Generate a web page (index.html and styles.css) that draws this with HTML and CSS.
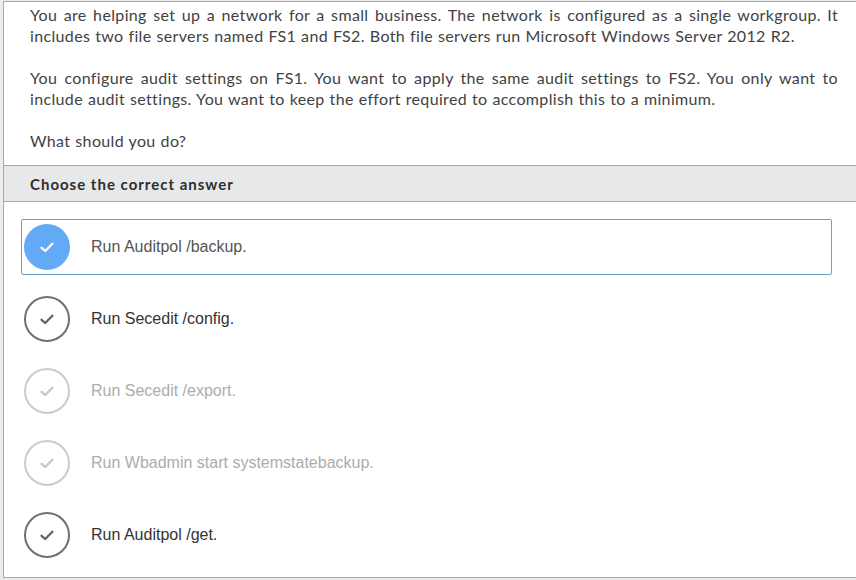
FILE: index.html
```html
<!DOCTYPE html>
<html>
<head>
<meta charset="utf-8">
<link rel="stylesheet" href="styles.css">
</head>
<body>
<div class="panel">
  <div class="question">
    <p>You are helping set up a network for a small business. The network is configured as a single workgroup. It includes two file servers named FS1 and FS2. Both file servers run Microsoft Windows Server 2012 R2.</p>
    <p>You configure audit settings on FS1. You want to apply the same audit settings to FS2. You only want to include audit settings. You want to keep the effort required to accomplish this to a minimum.</p>
    <p>What should you do?</p>
  </div>
  <div class="header">Choose the correct answer</div>
  <div class="options">
    <div class="option selected">
      <span class="circle"><svg viewBox="0 0 14 11" width="14" height="11"><path d="M1.6 5.8 L5.2 9 L12.4 1.8" fill="none" stroke="currentColor" stroke-width="2.3" stroke-linecap="round" stroke-linejoin="round"/></svg></span>
      <span class="label">Run Auditpol /backup.</span>
    </div>
    <div class="option dark">
      <span class="circle"><svg viewBox="0 0 14 11" width="14" height="11"><path d="M1.6 5.8 L5.2 9 L12.4 1.8" fill="none" stroke="currentColor" stroke-width="2.3" stroke-linecap="round" stroke-linejoin="round"/></svg></span>
      <span class="label">Run Secedit /config.</span>
    </div>
    <div class="option faded">
      <span class="circle"><svg viewBox="0 0 14 11" width="14" height="11"><path d="M1.6 5.8 L5.2 9 L12.4 1.8" fill="none" stroke="currentColor" stroke-width="2.3" stroke-linecap="round" stroke-linejoin="round"/></svg></span>
      <span class="label">Run Secedit /export.</span>
    </div>
    <div class="option faded">
      <span class="circle"><svg viewBox="0 0 14 11" width="14" height="11"><path d="M1.6 5.8 L5.2 9 L12.4 1.8" fill="none" stroke="currentColor" stroke-width="2.3" stroke-linecap="round" stroke-linejoin="round"/></svg></span>
      <span class="label">Run Wbadmin start systemstatebackup.</span>
    </div>
    <div class="option dark">
      <span class="circle"><svg viewBox="0 0 14 11" width="14" height="11"><path d="M1.6 5.8 L5.2 9 L12.4 1.8" fill="none" stroke="currentColor" stroke-width="2.3" stroke-linecap="round" stroke-linejoin="round"/></svg></span>
      <span class="label">Run Auditpol /get.</span>
    </div>
  </div>
</div>
</body>
</html>
```

FILE: styles.css
```css
html, body {
  margin: 0;
  padding: 0;
  background: #ececec;
  height: 580px;
  overflow: hidden;
}

.panel {
  margin: 1px 0 0 3px;
  background: #fff;
  border-top: 1px solid #a9a9a9;
  border-left: 1px solid #a9a9a9;
  border-bottom: 1px solid #a9a9a9;
  height: 577px;
  box-sizing: border-box;
  display: flex;
  flex-direction: column;
}

.question {
  padding: 2px 18px 14px 26px;
  font-family: Lato, "Open Sans", sans-serif;
  font-size: 16px;
  line-height: 21px;
  color: #424242;
  letter-spacing: 0.35px;
  word-spacing: 0.5px;
}

.question p {
  margin: 0 0 21px 0;
  text-align: justify;
}

.question p:last-child {
  margin-bottom: 0;
}

.header {
  background: #e6e8ea;
  border-top: 1px solid #a8a8a8;
  border-bottom: 1px solid #a8a8a8;
  height: 37px;
  box-sizing: border-box;
  padding-left: 26px;
  display: flex;
  align-items: center;
  font-family: Lato, "Open Sans", sans-serif;
  font-weight: 700;
  font-size: 15px;
  letter-spacing: 1px;
  color: #2e2e2e;
}

.options {
  padding: 17px 24px 0 17px;
  display: flex;
  flex-direction: column;
  gap: 16px;
}

.option {
  height: 56px;
  box-sizing: border-box;
  border: 1px solid transparent;
  border-radius: 2px;
  padding-left: 2px;
  display: flex;
  align-items: center;
  gap: 21px;
  font-family: "Liberation Sans", Arial, sans-serif;
  font-size: 16px;
}

.circle {
  width: 46px;
  height: 46px;
  box-sizing: border-box;
  border-radius: 50%;
  border: 2px solid #707070;
  display: flex;
  align-items: center;
  justify-content: center;
  color: #646464;
  flex: none;
}

.circle svg {
  margin-top: 1px;
}

.option.selected {
  border-color: #6e9fc4;
}

.option.selected .circle {
  background: #62aaf5;
  border-color: #62aaf5;
  color: #fff;
}

.option.selected .label {
  color: #555;
}

.option.dark .label {
  color: #333;
}

.option.faded .circle {
  border-color: #cbcbcb;
  color: #c4c4c4;
}

.option.faded .label {
  color: #acacac;
}
```
